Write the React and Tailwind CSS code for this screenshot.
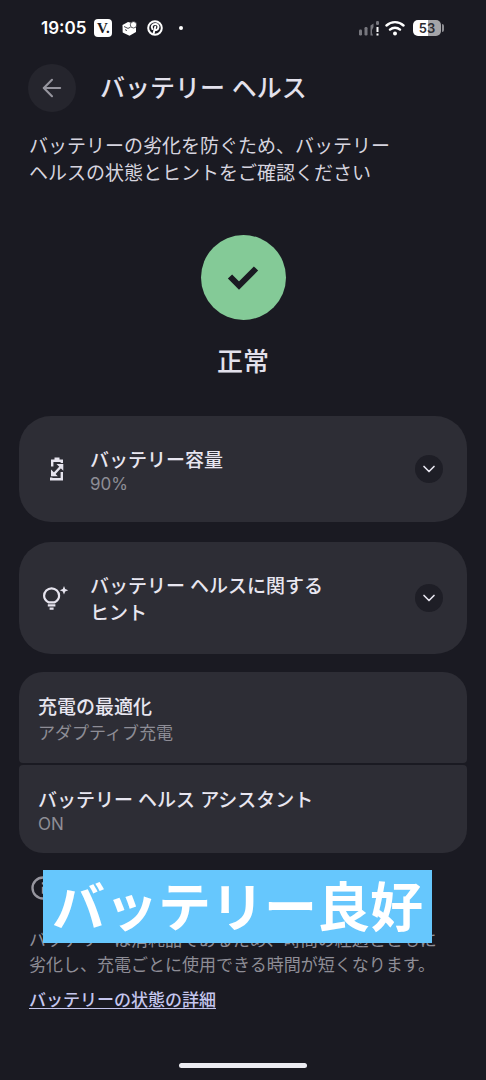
import React, { useState } from "react";
import { ArrowLeft, ChevronDown } from "lucide-react";

function StatusBar() {
  return (
    <div className="flex h-14 items-center justify-between pl-[41px] pr-[42px] text-white">
      <div className="flex items-center">
        <span className="text-[17px] font-semibold leading-6">19:05</span>
        <span className="ml-2 flex size-[18px] items-center justify-center rounded-sm bg-white font-['Liberation_Serif',serif] text-[15px] font-bold leading-none text-[#1a1a22]">
          V.
        </span>
        <svg className="ml-[10px] size-[15px]" viewBox="0 0 15 15" aria-hidden="true">
          <path fill="currentColor" d="M0.500 4 6 1l4 1 4 3v6l-6.500 3.800L0.700 11.400z" />
          <circle cx="11.500" cy="3.800" r="3.200" fill="currentColor" stroke="#1a1a22" strokeWidth="0.7" />
          <path fill="none" stroke="#1a1a22" strokeWidth="0.8" d="M2 5.500 6 7.400l2.500-1.200M3 8.600l2 1" />
        </svg>
        <svg className="ml-[10px] size-4" viewBox="0 0 16 16" fill="none" stroke="currentColor" aria-hidden="true">
          <circle cx="8" cy="8" r="6.800" strokeWidth="2" />
          <path strokeWidth="2" strokeLinecap="round" d="M5.400 9C3.600 6.200 5.600 4 8.200 4c2.400 0 3.600 1.600 3.200 3.500-.5 2.600-2.800 3.200-3.600 1.800M8.300 6.800 6.600 13.400" />
        </svg>
        <span className="ml-4 size-1 rounded-full bg-white" />
      </div>
      <div className="flex items-center">
        <svg className="h-4 w-[22px]" viewBox="0 0 22 16" aria-hidden="true">
          <g fill="#77777e">
            <rect x="0" y="9.500" width="3" height="6" rx="1.200" />
            <rect x="5.500" y="7" width="3" height="8.500" rx="1.200" />
            <path d="M11.500 5.500 14.500 3.500V7l-1.500 3v3l1 2.500h-2.500z" />
            <rect x="17" y="1" width="3" height="4" rx="1.200" />
          </g>
          <path fill="#fff" d="M17.500 7h2v5h-2zM17.500 13.500h2v2h-2z" />
        </svg>
        <svg className="ml-1 h-4 w-5" viewBox="0 0 20 16" fill="none" stroke="currentColor" strokeWidth="2.400" strokeLinecap="round" aria-hidden="true">
          <path d="M1.500 5.500a12.500 12.500 0 0 1 17 0M5 9.600a7.500 7.500 0 0 1 10 0" />
          <circle cx="10" cy="13.600" r="2" fill="currentColor" stroke="none" />
        </svg>
        <span className="ml-2 flex h-4 w-7 items-center justify-center rounded-[5px] bg-linear-to-r from-white from-55% to-[#a4a4a8] to-55% text-[13px] font-semibold leading-4 text-[#2b2b31]">
          53
        </span>
        <span className="ml-px h-2 w-[2px] rounded-r-sm bg-[#8d8d92]" />
      </div>
    </div>
  );
}

function CapacityIcon() {
  return (
    <svg className="size-6" viewBox="0 0 24 24" fill="none" stroke="currentColor" strokeWidth="2.400" aria-hidden="true">
      <path d="M7.200 9.500V3.700h9.600V6M16.800 15v7.300H6.200V20.500M9.500 1.700h5M9 17l6.500-7" />
      <path fill="currentColor" stroke="none" d="M11.500 7h6.800v6.800zM6 12.500v6.800h6.800z" />
    </svg>
  );
}

function TipsIcon() {
  return (
    <svg className="h-6 w-[26px]" viewBox="0 0 26 24" fill="none" stroke="currentColor" strokeWidth="2.200" aria-hidden="true">
      <path d="M5.500 16.300C2.800 14.800 1.100 12.500 1.100 9.800a7.500 7.500 0 0 1 15 0c0 2.700-1.700 5-4.400 6.500z" />
      <path d="M4.800 19.300h7.600M6.600 22.600h4" />
      <path fill="currentColor" stroke="none" d="m21 0 1.200 3 3 1.200-3 1.200-1.200 3-1.200-3-3-1.200 3-1.200z" />
    </svg>
  );
}

function ExpandCard({ icon, title, summary }) {
  const [isOpen, setIsOpen] = useState(false);

  return (
    <button
      type="button"
      aria-expanded={isOpen}
      onClick={() => setIsOpen(!isOpen)}
      className="flex w-full items-center rounded-[32px] bg-[#2d2d35] px-6 text-left"
    >
      <span className="flex w-[47px] shrink-0 text-[#e6e4ee]">{icon}</span>
      <span className="flex-1 pt-[31px] pb-[27px]">
        <span className="block text-[19px] font-medium leading-[27px] text-[#e8e6f0]">{title}</span>
        {summary && <span className="block text-[17px] leading-[21px] text-[#8e8d96]">{summary}</span>}
      </span>
      <span className="flex size-7 items-center justify-center rounded-full bg-[#1e1e26] text-[#e8e6f0]">
        <ChevronDown className="size-5" />
      </span>
    </button>
  );
}

export default function App() {
  return (
    <div className="flex min-h-screen flex-col bg-[#1a1a22] font-['Inter','Noto_Sans_CJK_JP',sans-serif] text-[#e3e1ec]" lang="ja">
      <StatusBar />

      <header className="flex items-center gap-6 px-7 pt-2">
        <button
          type="button"
          aria-label="戻る"
          className="flex size-12 items-center justify-center rounded-full bg-[#25252d] text-[#96959e]"
        >
          <ArrowLeft className="size-7" strokeWidth={1.8} />
        </button>
        <h1 className="text-[25px] font-medium leading-9">バッテリー ヘルス</h1>
      </header>

      <main className="flex flex-col px-[19px]">
        <p className="mt-[21px] px-[10px] text-[19px] leading-[27px] text-[#d6d4df]">
          バッテリーの劣化を防ぐため、バッテリー
          <br />
          ヘルスの状態とヒントをご確認ください
        </p>

        <div className="mt-12 flex flex-col items-center">
          <div className="flex size-[85px] items-center justify-center rounded-full bg-[#84ca97]">
            <svg className="h-6 w-8" viewBox="0 0 32 24" fill="none" stroke="#1a1a22" strokeWidth="6" aria-hidden="true">
              <path d="M3 10.500 12 19.500 29 2.500" />
            </svg>
          </div>
          <p className="mt-6 text-[26px] font-medium leading-9">正常</p>
        </div>

        <div className="mt-9 flex flex-col gap-5">
          <ExpandCard
            icon={
              <span className="pl-[2px]">
                <CapacityIcon />
              </span>
            }
            title="バッテリー容量"
            summary="90%"
          />
          <ExpandCard
            icon={<TipsIcon />}
            title={
              <>
                バッテリー ヘルスに関する
                <br />
                ヒント
              </>
            }
          />
        </div>

        <div className="mt-[18px] flex flex-col gap-[2px]">
          <button type="button" className="rounded-t-3xl rounded-b-sm bg-[#2d2d35] px-[19px] pt-[22px] pb-[18px] text-left">
            <span className="block text-[19px] font-medium leading-[27px] text-[#e8e6f0]">充電の最適化</span>
            <span className="block text-[17px] leading-6 text-[#8e8d96]">アダプティブ充電</span>
          </button>
          <button type="button" className="rounded-t-sm rounded-b-3xl bg-[#2d2d35] px-[19px] pt-[22px] pb-[18px] text-left">
            <span className="block text-[19px] font-medium leading-[27px] text-[#e8e6f0]">バッテリー ヘルス アシスタント</span>
            <span className="block text-[17px] leading-[21px] text-[#8e8d96]">ON</span>
          </button>
        </div>

        <section className="relative px-[10px] pt-[21px] text-[17px] leading-[25px]">
          <svg className="size-7 text-[#96959e]" viewBox="0 0 24 24" fill="none" stroke="currentColor" strokeWidth="2" aria-hidden="true">
            <circle cx="12" cy="12" r="9" />
            <path d="M12 11v6M12 7v2" />
          </svg>
          <p className="mt-[26px] text-[#8e8d96]">
            バッテリーは消耗品であるため、時間の経過とともに
            <br />
            劣化し、充電ごとに使用できる時間が短くなります。
          </p>
          <a href="#details" className="mt-[10px] inline-block font-medium text-[#c5c6ee] underline underline-offset-2">
            バッテリーの状態の詳細
          </a>
          <p className="absolute top-[17px] left-6 bg-[#66c7fd] px-[9px] pt-1 text-[53px] font-bold leading-[69px] whitespace-nowrap text-white">
            バッテリー良好
          </p>
        </section>
      </main>

      <div className="mt-auto flex justify-center pt-6 pb-3">
        <span className="h-[5px] w-32 rounded-full bg-[#ececf2]" />
      </div>
    </div>
  );
}
